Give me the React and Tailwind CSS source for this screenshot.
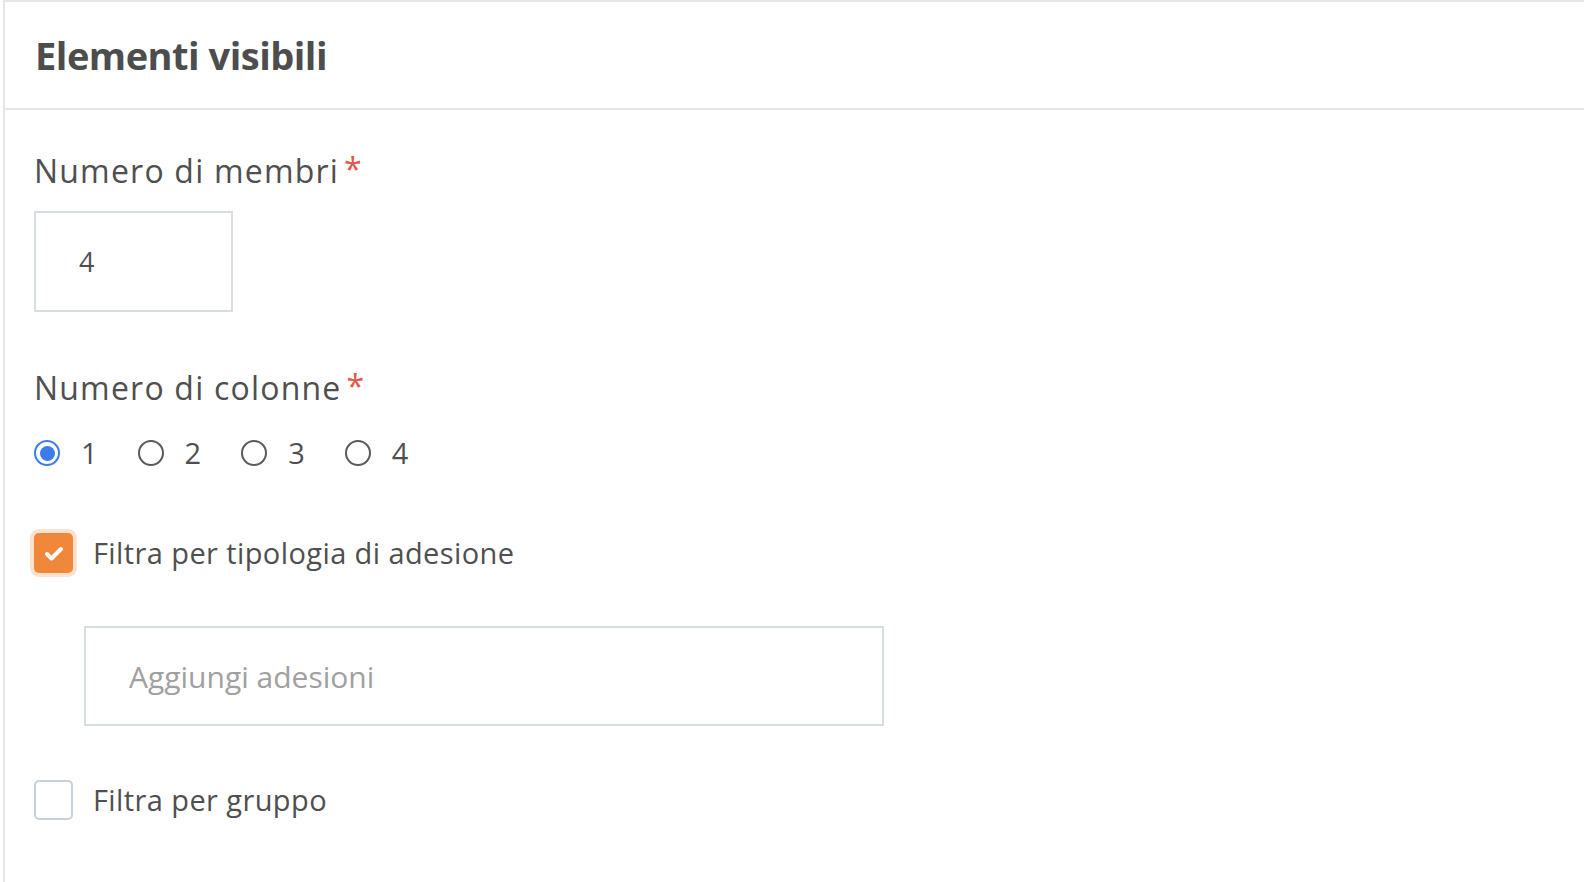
import React, { useState } from 'react';

const font = { fontFamily: '"Open Sans", Lato, sans-serif' };

function Label({ children }) {
  return (
    <div className="flex items-start text-[32px] tracking-[1.2px] leading-[40px] text-[#4f4f4f]">
      <span>{children}</span>
      <span className="ml-[5px] text-[32px] leading-[36px] text-[#e0584c]">*</span>
    </div>
  );
}

function Radio({ value, checked, onChange }) {
  return (
    <label className="flex items-center cursor-pointer">
      <span
        className={
          checked
            ? 'w-[26px] h-[26px] rounded-full border-2 border-[#3b7bea] flex items-center justify-center'
            : 'w-[26px] h-[26px] rounded-full border-2 border-[#5a5a5a] flex items-center justify-center'
        }
        onClick={onChange}
      >
        {checked && <span className="w-[15px] h-[15px] rounded-full bg-[#3b7bea]" />}
      </span>
      <span className="ml-[21px] text-[29px] leading-[40px] text-[#4f4f4f]">{value}</span>
    </label>
  );
}

function Checkbox({ checked, label, onChange }) {
  return (
    <div className="flex items-center">
      {checked ? (
        <button
          onClick={onChange}
          className="w-[39px] h-[40px] rounded-[5px] bg-[#f0873b] ring-4 ring-[#fce2cf] flex items-center justify-center"
        >
          <svg width="20" height="15" viewBox="0 0 20 15" fill="none">
            <path d="M3 8l4.5 4.5L17 3" stroke="white" strokeWidth="4" strokeLinecap="round" strokeLinejoin="round" />
          </svg>
        </button>
      ) : (
        <button
          onClick={onChange}
          className="w-[39px] h-[40px] rounded-[5px] border-2 border-[#c8d0da] bg-white"
        />
      )}
      <span className="ml-[20px] text-[29px] tracking-[0.4px] leading-[40px] text-[#4f4f4f]">{label}</span>
    </div>
  );
}

export default function App() {
  const [cols, setCols] = useState(1);
  const [byType, setByType] = useState(true);
  const [byGroup, setByGroup] = useState(false);

  return (
    <div style={font} className="min-h-screen bg-white">
      <div className="ml-[3px] min-h-[882px] border-l-2 border-t-2 border-[#e6e6e6]">
        <div className="h-[108px] border-b-2 border-[#e6e6e6] flex items-center pl-[30px]">
          <h2 className="text-[38px] font-bold text-[#4d4d4d] tracking-[-0.5px]">Elementi visibili</h2>
        </div>
        <div className="pl-[29px] pt-[41px] flex flex-col">
          <Label>Numero di membri</Label>
          <input
            defaultValue="4"
            className="mt-[20px] w-[199px] h-[101px] border-2 border-[#d8dde4] pl-[43px] text-[27px] text-[#4f4f4f] outline-none"
          />
          <div className="mt-[56px]">
            <Label>Numero di colonne</Label>
          </div>
          <div className="mt-[25px] flex items-center gap-[40px]">
            {[1, 2, 3, 4].map((n) => (
              <Radio key={n} value={n} checked={cols === n} onChange={() => setCols(n)} />
            ))}
          </div>
          <div className="mt-[60px]">
            <Checkbox checked={byType} label="Filtra per tipologia di adesione" onChange={() => setByType(!byType)} />
          </div>
          <input
            placeholder="Aggiungi adesioni"
            className="mt-[53px] ml-[50px] w-[800px] h-[100px] border-2 border-[#d8dde4] pl-[43px] text-[30px] text-[#4f4f4f] placeholder-[#a0a0a0] outline-none"
          />
          <div className="mt-[54px]">
            <Checkbox checked={byGroup} label="Filtra per gruppo" onChange={() => setByGroup(!byGroup)} />
          </div>
        </div>
      </div>
    </div>
  );
}
